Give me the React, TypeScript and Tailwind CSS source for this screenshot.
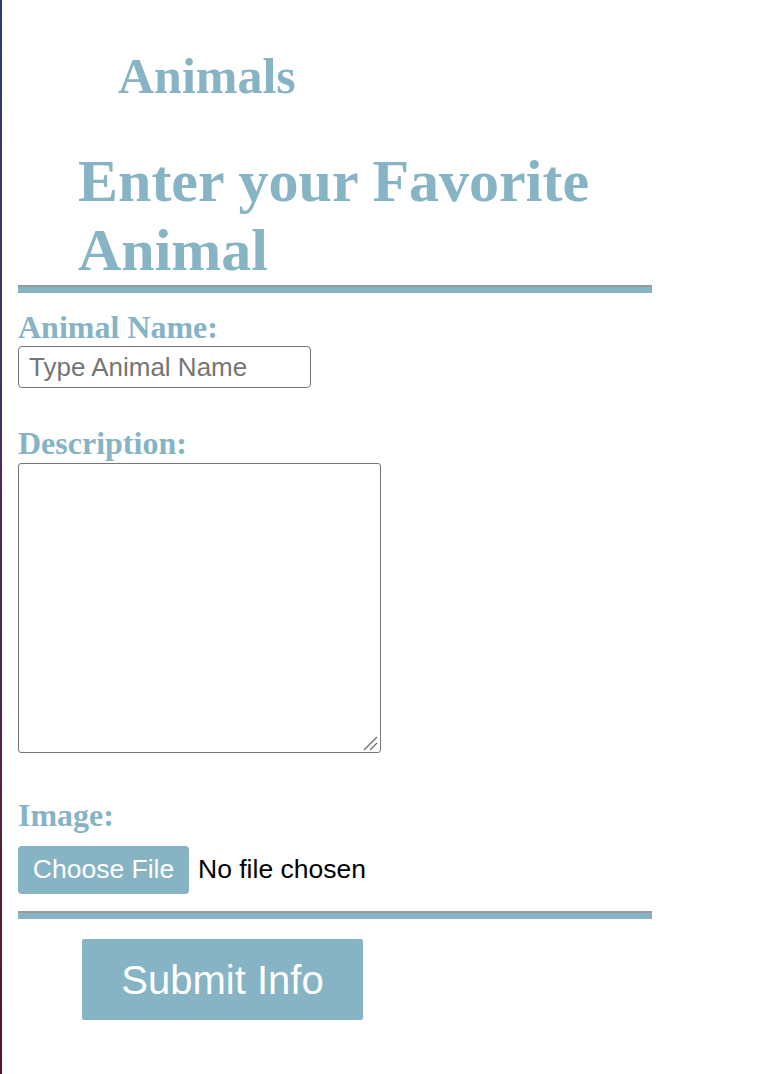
export default function App() {
  return (
    <div className="min-h-[1074px] bg-gradient-to-b from-[#2b3f73] via-[#4a2a5a] to-[#5a1326] pl-[2px]">
      <div className="min-h-[1074px] bg-white pl-[16px]">
        <div className="w-[634px] font-['Liberation_Serif',serif] text-[#86b4c5]">
          {/* ---------------- HEADER ---------------- */}
          <h1 className="pt-[47px] pl-[100px] text-[50px] leading-[58px] font-bold">
            Animals
          </h1>
          <h2 className="mt-[42px] pl-[60px] text-[60px] leading-[69px] font-bold">
            Enter your Favorite Animal
          </h2>

          <div className="h-[8px] border-t-2 border-[#9a9a9a] bg-[#86b4c5]" />

          {/* ---------------- FORM ---------------- */}
          <label className="mt-[16px] block text-[32px] leading-[37px] font-bold">
            Animal Name:
          </label>
          <input
            type="text"
            placeholder="Type Animal Name"
            className="block h-[42px] w-[293px] rounded-[4px] border border-[#767676] bg-white pl-[10px] font-['Liberation_Sans',Arial,sans-serif] text-[26px] text-black placeholder:text-[#757575] outline-none"
          />

          <label className="mt-[37px] block text-[32px] leading-[37px] font-bold">
            Description:
          </label>
          <div className="relative mt-[1px] h-[290px] w-[363px]">
            <textarea className="block h-[290px] w-[363px] resize-none rounded-[3px] border border-[#767676] bg-white outline-none" />
            {/* resize grip */}
            <svg
              className="pointer-events-none absolute right-[3px] bottom-[2px]"
              width="15"
              height="15"
              viewBox="0 0 15 15"
            >
              <line x1="14" y1="1" x2="1" y2="14" stroke="#6b6b6b" strokeWidth="1.3" />
              <line x1="14" y1="7" x2="7" y2="14" stroke="#6b6b6b" strokeWidth="1.3" />
            </svg>
          </div>

          <label className="mt-[44px] block text-[32px] leading-[37px] font-bold">
            Image:
          </label>
          <div className="mt-[12px] flex h-[48px] items-center font-['Liberation_Sans',Arial,sans-serif] text-[26.5px]">
            <span className="flex h-[48px] w-[171px] items-center justify-center rounded-[4px] bg-[#86b4c5] text-white">
              Choose File
            </span>
            <span className="ml-[9px] text-black">No file chosen</span>
          </div>

          <div className="mt-[17px] h-[8px] border-t-2 border-[#9a9a9a] bg-[#86b4c5]" />

          <button className="mt-[20px] ml-[64px] flex h-[81px] w-[281px] items-center justify-center rounded-[2px] bg-[#86b4c5] font-['Liberation_Sans',Arial,sans-serif] text-[40px] text-white">
            Submit Info
          </button>
        </div>
      </div>
    </div>
  )
}
